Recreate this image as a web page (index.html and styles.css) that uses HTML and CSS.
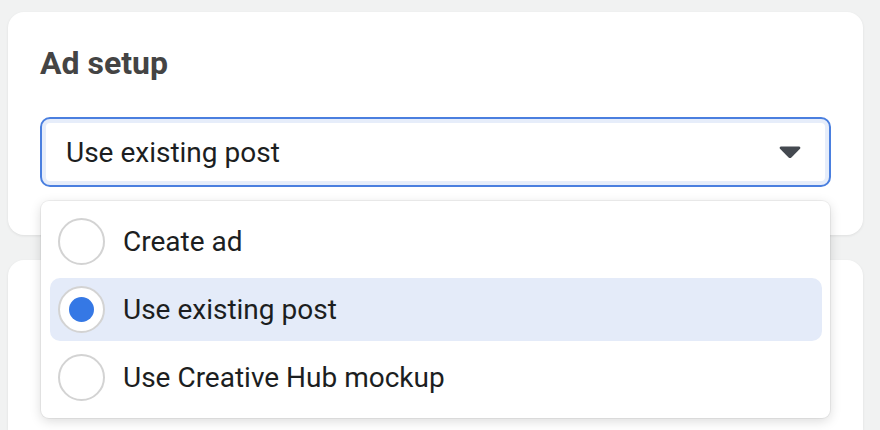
FILE: index.html
```html
<!DOCTYPE html>
<html lang="en">
  <head>
    <meta charset="UTF-8" />
    <meta name="viewport" content="width=device-width, initial-scale=1.0" />
    <title>Ad setup</title>
    <link rel="stylesheet" href="styles.css">
  </head>
  <body>
    <section class="card">
      <h2 class="card-title">Ad setup</h2>

      <div class="select-wrap">
        <button class="select" type="button">
          <span>Use existing post</span>
          <svg class="caret" width="22" height="14" viewBox="0 0 22 14">
            <path d="M2 1.5h18c1.2 0 1.8 1.3 1 2.2l-8.6 8.8c-.8.8-2 .8-2.8 0L1 3.7C.2 2.8.8 1.5 2 1.5z" fill="#444950" />
          </svg>
        </button>

        <ul class="menu">
          <li class="menu-item">
            <span class="radio"></span>
            <span>Create ad</span>
          </li>
          <li class="menu-item selected">
            <span class="radio checked"></span>
            <span>Use existing post</span>
          </li>
          <li class="menu-item">
            <span class="radio"></span>
            <span>Use Creative Hub mockup</span>
          </li>
        </ul>
      </div>
    </section>

    <section class="card card-next"></section>
  </body>
</html>
```

FILE: styles.css
```css
body {
  font-family: Roboto, "Liberation Sans", Arial, sans-serif;
  margin: 0;
  padding: 12px 17px 0 8px;
  background-color: #f1f2f2;
  color: #1c1e21;
}

.card {
  background-color: #fff;
  border-radius: 16px;
  padding: 33px 32px 48px;
  box-shadow: 0 1px 3px rgba(0, 0, 0, 0.08);
}

.card-next {
  margin-top: 25px;
  height: 170px;
  padding: 0;
  border-radius: 16px 16px 0 0;
}

.card-title {
  margin: 0 0 36px;
  font-size: 32px;
  line-height: 36px;
  font-weight: 700;
  color: #444;
}

.select-wrap {
  position: relative;
}

.select {
  display: flex;
  align-items: center;
  justify-content: space-between;
  width: 100%;
  height: 70px;
  padding: 0 28px 0 24px;
  box-sizing: border-box;
  background-color: #fff;
  border: 2px solid #4a7fdf;
  border-radius: 10px;
  box-shadow: inset 0 0 0 4px #e6edfa;
  font-family: inherit;
  font-size: 28px;
  color: #1c1e21;
  cursor: pointer;
}

.caret {
  display: block;
}

.menu {
  position: absolute;
  top: 84px;
  left: 1px;
  right: 1px;
  margin: 0;
  padding: 9px 8px 9px 9px;
  list-style: none;
  background-color: #fff;
  border-radius: 8px;
  box-shadow: 0 0 0 1px rgba(0, 0, 0, 0.05), 0 3px 12px rgba(0, 0, 0, 0.15);
  display: flex;
  flex-direction: column;
  gap: 5px;
  z-index: 2;
}

.menu-item {
  display: flex;
  align-items: center;
  gap: 18px;
  height: 63px;
  padding: 0 8px;
  border-radius: 10px;
  font-size: 28px;
}

.menu-item.selected {
  background-color: #e4ebf9;
}

.radio {
  width: 47px;
  height: 47px;
  box-sizing: border-box;
  border: 2px solid #d3d3d3;
  border-radius: 50%;
  background-color: #fff;
  display: flex;
  align-items: center;
  justify-content: center;
  flex-shrink: 0;
}

.radio.checked::after {
  content: "";
  width: 25px;
  height: 25px;
  border-radius: 50%;
  background-color: #3578e5;
}
```
